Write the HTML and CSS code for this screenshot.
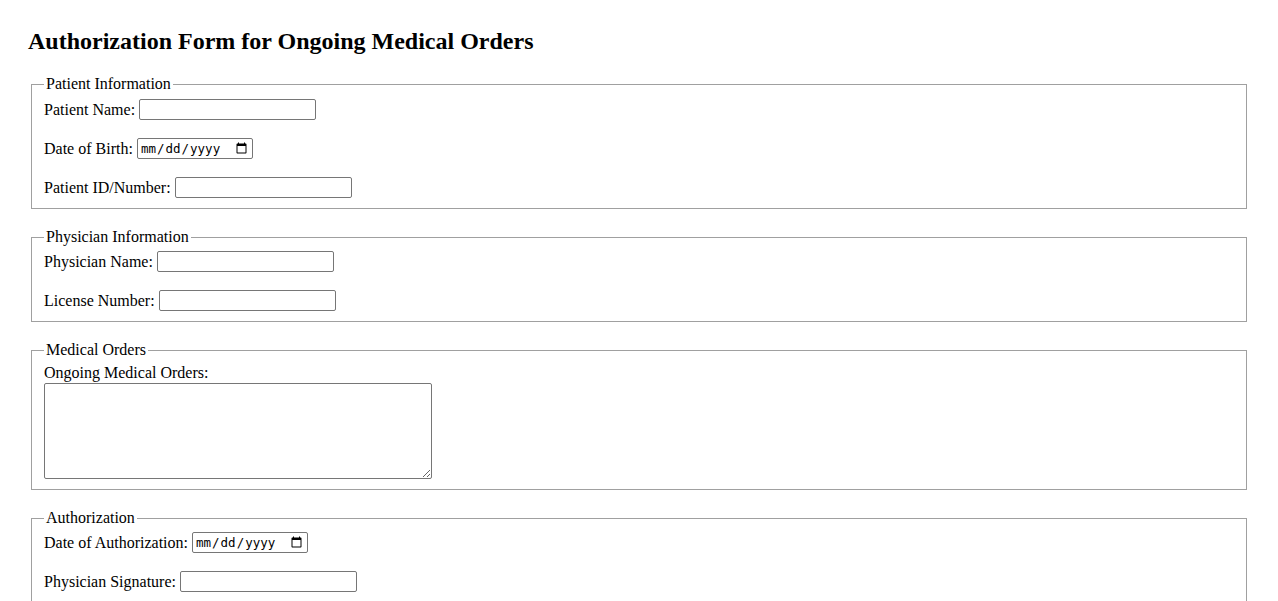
FILE: index.html
```html
<!DOCTYPE html>
<html lang="en">
<head>
<meta charset="utf-8">
<title>Authorization Form for Ongoing Medical Orders</title>
<link rel="stylesheet" href="styles.css">
</head>
<body>
<div class="page">
  <h2 class="title">Authorization Form for Ongoing Medical Orders</h2>
  <form class="form">
    <fieldset class="group">
      <legend class="legend">Patient Information</legend>
      <div class="row"><label class="label" for="pname">Patient Name:</label> <input class="text" type="text" id="pname"></div>
      <div class="row"><label class="label" for="dob">Date of Birth:</label> <input class="date" type="date" id="dob"></div>
      <div class="row last"><label class="label" for="pid">Patient ID/Number:</label> <input class="text" type="text" id="pid"></div>
    </fieldset>
    <fieldset class="group">
      <legend class="legend">Physician Information</legend>
      <div class="row"><label class="label" for="phname">Physician Name:</label> <input class="text" type="text" id="phname"></div>
      <div class="row last"><label class="label" for="lic">License Number:</label> <input class="text" type="text" id="lic"></div>
    </fieldset>
    <fieldset class="group">
      <legend class="legend">Medical Orders</legend>
      <div class="row last"><label class="label block" for="orders">Ongoing Medical Orders:</label><textarea class="area" id="orders"></textarea></div>
    </fieldset>
    <fieldset class="group">
      <legend class="legend">Authorization</legend>
      <div class="row"><label class="label" for="doa">Date of Authorization:</label> <input class="date" type="date" id="doa"></div>
      <div class="row last"><label class="label" for="sig">Physician Signature:</label> <input class="text" type="text" id="sig"></div>
    </fieldset>
  </form>
</div>
</body>
</html>
```

FILE: styles.css
```css
html, body {
  background: #ffffff;
}
body {
  margin: 8px;
  font-family: "Liberation Serif", "Times New Roman", serif;
  font-size: 16px;
  color: #000000;
}
.page {
  padding: 0 20px;
}
.title {
  font-size: 24px;
  font-weight: bold;
  margin: 20px 0;
}
.form {
  margin: 0;
}
.group {
  margin: 0 3px 19px;
  padding: 5px 12px 10px;
  border: 1px solid #a0a0a0;
  box-shadow: inset 1px 1px 0 #ffffff;
}
.group:first-of-type {
  padding-top: 6px;
}
.legend {
  padding: 0 2px;
}
.row {
  margin-bottom: 18px;
  line-height: 18px;
}
.row.last {
  margin-bottom: 0;
}
.label {
  vertical-align: middle;
}
.label.block {
  display: block;
}
.text, .date {
  box-sizing: border-box;
  height: 21px;
  vertical-align: middle;
  border: 1px solid #767676;
  border-radius: 2px;
  padding: 1px 2px;
  font-family: "Liberation Sans", Arial, sans-serif;
  font-size: 13.33px;
  background: #ffffff;
}
.text {
  width: 177px;
}
.date {
  width: 116px;
  font-family: "DejaVu Sans Mono", "Liberation Mono", monospace;
  font-size: 12.5px;
  color: #000000;
}
.area {
  display: block;
  box-sizing: border-box;
  width: 388px;
  height: 96px;
  margin-top: 1px;
  border: 1px solid #767676;
  border-radius: 2px;
  font-family: "Liberation Mono", monospace;
  font-size: 13px;
}
```
